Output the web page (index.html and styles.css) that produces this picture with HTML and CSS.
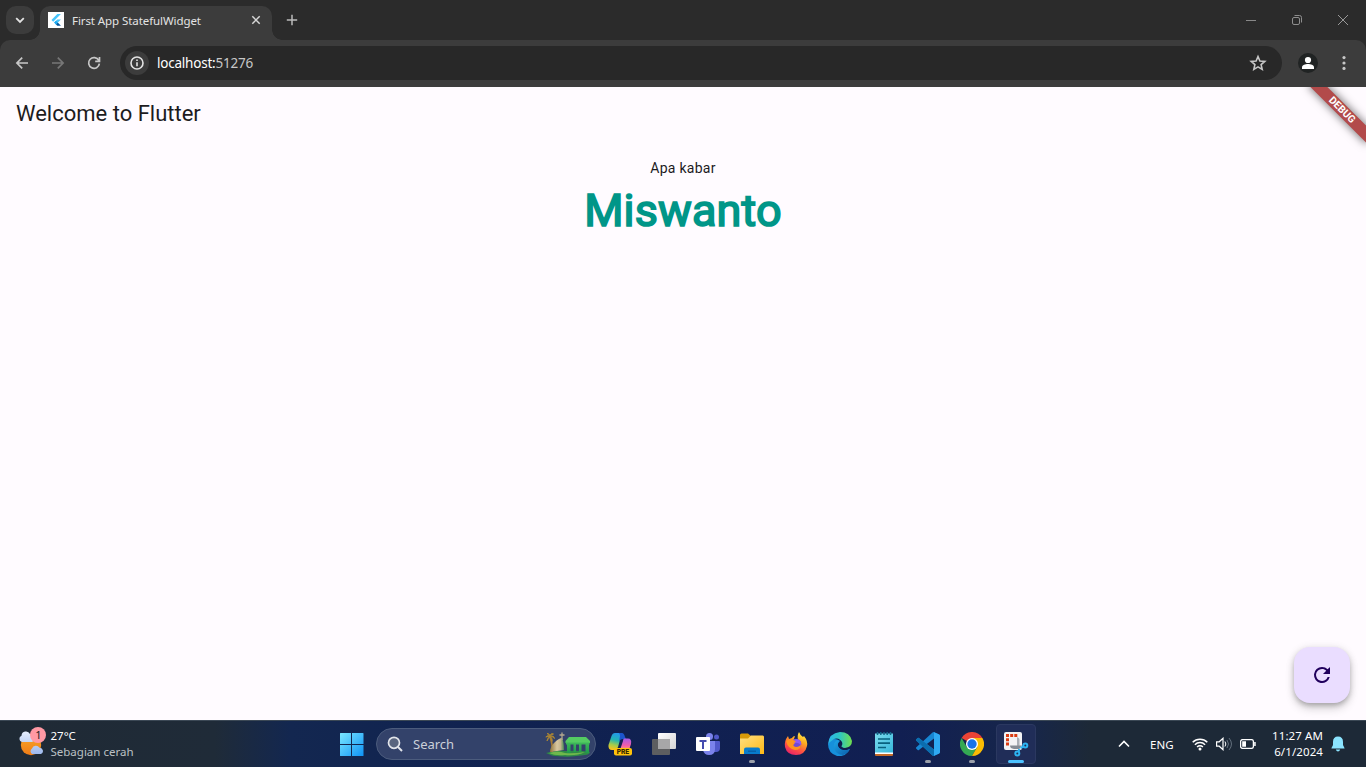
FILE: index.html
```html
<!DOCTYPE html>
<html lang="en">
<head>
<meta charset="utf-8">
<title>First App StatefulWidget</title>
<link rel="stylesheet" href="styles.css">
</head>
<body>
<header class="tabstrip">
  <button class="tab-search"><svg width="12" height="12" viewBox="0 0 12 12"><path d="M2.200 4.200 6 8l3.800-3.800" fill="none" stroke="#e3e3e3" stroke-width="1.800"/></svg></button>
  <div class="tab">
    <svg class="favicon" width="16" height="16" viewBox="0 0 16 16"><path fill="#fff" d="M0 0h16v16H0z"/><g transform="translate(2.300 2) scale(.49)"><path fill="#47c5fb" d="M14.314 0 2.300 12 6 15.700 21.684.013zM14.328 11.072 7.857 17.530l3.700 3.700 10.140-10.160z"/><path fill="#00569e" d="m11.550 21.200 3.690-3.680L21.700 24h-7.370z"/><path fill="#1ba8f0" d="m7.857 17.530 3.690-3.690 3.700 3.690-3.700 3.690z"/></g></svg>
    <span class="tab-title">First App StatefulWidget</span>
    <svg class="tab-close" width="16" height="16" viewBox="0 0 16 16"><path d="m4.300 4.300 7.400 7.400m0-7.400-7.400 7.400" stroke="#d6d6d6" stroke-width="1.500"/></svg>
  </div>
  <svg class="new-tab" width="16" height="16" viewBox="0 0 16 16"><path d="M8 2.800v10.400M2.800 8h10.400" stroke="#bcbcbc" stroke-width="1.500"/></svg>
  <div class="window-controls">
    <svg width="46" height="40" viewBox="0 0 46 40"><path d="M18 20.500h10" stroke="#888"/></svg>
    <svg width="46" height="40" viewBox="0 0 46 40"><g fill="none" stroke="#8e8e8e"><rect x="18.500" y="17.500" width="7" height="7" rx="1.500"/><path d="M20.500 15.500h5a2 2 0 0 1 2 2v5"/></g></svg>
    <svg width="46" height="40" viewBox="0 0 46 40"><path d="m18 15 10 10m0-10-10 10" stroke="#999"/></svg>
  </div>
</header>
<nav class="toolbar">
  <div class="nav-buttons">
    <svg width="16" height="16" viewBox="0 0 16 16"><path d="M14 8H3m5.200-5.300L2.900 8l5.300 5.300" fill="none" stroke="#c7c7c7" stroke-width="1.700"/></svg>
    <svg width="16" height="16" viewBox="0 0 16 16"><path d="M2 8h11M7.800 2.700 13.100 8l-5.300 5.300" fill="none" stroke="#777" stroke-width="1.700"/></svg>
    <svg width="16" height="16" viewBox="0 0 16 16"><path d="M12.800 5.400A5.400 5.400 0 1 0 13.400 8.700M13.500 2v4.300H9.200" fill="none" stroke="#c7c7c7" stroke-width="1.700"/></svg>
  </div>
  <div class="omnibox">
    <span class="site-info"><svg width="16" height="16" viewBox="0 0 16 16"><circle cx="8" cy="8" r="6" fill="none" stroke="#e3e3e3" stroke-width="1.600"/><path d="M8 7.200v4M8 4.500v1.600" stroke="#e3e3e3" stroke-width="1.600"/></svg></span>
    <span class="url">localhost:<span class="port">51276</span></span>
    <svg class="star" width="18" height="18" viewBox="0 0 18 18"><path d="m9 2.500 1.900 4.500 4.900.4-3.700 3.200 1.100 4.800L9 12.900l-4.200 2.500 1.100-4.800-3.700-3.200L7.100 7z" fill="none" stroke="#c7c7c7" stroke-width="1.600"/></svg>
  </div>
  <svg class="profile" width="20" height="20" viewBox="0 0 20 20"><circle cx="10" cy="10" r="10" fill="#202323"/><circle cx="10" cy="7" r="3.100" fill="#fff"/><path fill="#fff" d="M4 16v-1.700c0-2.100 3.400-3.200 6-3.200s6 1.100 6 3.200V16z"/></svg>
  <svg class="kebab" width="4" height="16" viewBox="0 0 4 16"><g fill="#c7c7c7"><circle cx="2" cy="2.600" r="1.600"/><circle cx="2" cy="8" r="1.600"/><circle cx="2" cy="13.400" r="1.600"/></g></svg>
</nav>
<main class="app">
  <h1 class="app-title">Welcome to Flutter</h1>
  <div class="greeting">
    <p class="hello">Apa kabar</p>
    <p class="name">Miswanto</p>
  </div>
  <button class="fab"><svg width="24" height="24" viewBox="0 0 24 24"><path fill="#21005d" d="M17.650 6.350A7.958 7.958 0 0 0 12 4a8 8 0 1 0 7.730 10h-2.080A6 6 0 1 1 12 6c1.660 0 3.140.69 4.220 1.780L13 11h7V4z"/></svg></button>
  <div class="banner">DEBUG</div>
</main>
<footer class="taskbar">
  <div class="weather">
    <svg width="32" height="36" viewBox="0 -4 32 36"><defs><linearGradient id="sun" x2="0" y2="1"><stop stop-color="#f9a82a"/><stop offset="1" stop-color="#ee7b16"/></linearGradient><linearGradient id="cloud" x2="0" y2="1"><stop stop-color="#e5edfc"/><stop offset="1" stop-color="#9db9ec"/></linearGradient></defs><circle cx="14" cy="15" r="10.200" fill="url(#sun)"/><path fill="url(#cloud)" d="M5 12a3.300 3.300 0 0 1-.5-6.300 4.500 4.500 0 0 1 8.500-1.700 4 4 0 0 1 2 8zM15 24a3.300 3.300 0 0 1 0-5.500 4.200 4.200 0 0 1 7.500-.8 3.300 3.300 0 0 1 1.500 6.300z"/><circle cx="21" cy="5" r="8" fill="#ff99a4"/><text x="21.500" y="9" class="badge-text">1</text></svg>
    <div class="weather-text"><span>27°C</span><span class="weather-desc">Sebagian cerah</span></div>
  </div>
  <div class="tasks">
    <div class="task"><svg width="24" height="24" viewBox="0 0 24 24"><defs><linearGradient id="win" gradientUnits="userSpaceOnUse" x1="0" y1="0" x2="24" y2="24"><stop stop-color="#7de9ff"/><stop offset="1" stop-color="#0d91f5"/></linearGradient></defs><path fill="url(#win)" d="M0 1.500Q0 1 .5 1H11v11H0zM12 1h11q.5 0 .5.500v10.500H12zM0 13h11v11H.5q-.5 0-.5-.5zM12 13h11.500v10.500q0 .5-.5.500H12z"/></svg></div>
    <div class="search">
      <svg width="16" height="16" viewBox="0 0 16 16"><circle cx="7" cy="6.800" r="5.500" fill="#59657f" stroke="#e2e5eb" stroke-width="1.700"/><path d="m11 11 4 4" stroke="#e2e5eb" stroke-width="2"/></svg>
      <span>Search</span>
      <svg class="highlight" width="46" height="26" viewBox="0 0 46 26"><defs><linearGradient id="stone" x2="1"><stop stop-color="#8f7238"/><stop offset=".5" stop-color="#d9c7a0"/><stop offset=".75" stop-color="#c5b58e"/><stop offset="1" stop-color="#4c8c53"/></linearGradient><linearGradient id="temple" x2="0" y2="1"><stop stop-color="#3fb85a"/><stop offset="1" stop-color="#1f9a4c"/></linearGradient></defs><path fill="#2f8a47" d="M1 22q10-3 21-2 13-1 23 1 0 3-9 3.500-9 1.500-18 1-9-.5-11-1z"/><path d="M5 6q3 8 2 15" fill="none" stroke="#a8782f" stroke-width="1.700"/><path d="M5 5.500Q3 3.500.800 6q2.200-.5 4.200-.5Q2 7 2 10q1.500-2.500 3-4.500 2 2 2 5 1-3-2-5 3 0 4.500 2Q9 4 5 5.500 7 3 8.500 3 5.500 1.500 5 5.500 4.500 2 2 2.500 4 3 5 5.500z" fill="#a98434" stroke="#a98434" stroke-width=".9"/><path fill="url(#stone)" d="M5 21q0-5 4-9 5-5 8-5 2 4 2 12z"/><path d="M17 9V1.500M14.500 4h5" stroke="#b4a88f" stroke-width="1.300"/><path fill="#54cc62" d="m20.500 10 3.500-4h17l4 4v2H20.500z"/><path fill="url(#temple)" d="M21 11.500h23.500v2H21zM22 13h3.500v9H22zM28.500 13H31v8h-2.500zM34 13h2.500v8H34zM40.500 13H44v9h-3.500z"/><path fill="#6fb84c" d="M4 22q9-3 16 0 7 1 20-1-8 4-20 3-10 1-16-2z"/></svg>
    </div>
    <div class="task"><svg width="24" height="24" viewBox="0 0 24 24"><defs><linearGradient id="cpa" x1=".5" x2=".3" y2="1"><stop stop-color="#2398e8"/><stop offset=".4" stop-color="#22b7b1"/><stop offset=".7" stop-color="#a6cb4b"/><stop offset="1" stop-color="#ffc31a"/></linearGradient><linearGradient id="cpb" x2="0" y2="1"><stop stop-color="#a65be8"/><stop offset=".6" stop-color="#f05ca9"/><stop offset="1" stop-color="#ff9b73"/></linearGradient></defs><path fill="url(#cpa)" d="M7 1h7L10 15q-1 3-4 3H4q-4 0-3.500-5L3.500 4Q4.500 1 7 1z"/><path fill="#1c55cc" d="M11 1h3q2 0 3 4l1 2h-3q-3 0-4 3l1-6q0-2-1-3z"/><path fill="url(#cpb)" d="M16 6.500h4q4 0 3 5.500l-2 6h-9l3-9q0-2 1-2.500z"/><rect x="6" y="16" width="18" height="7.500" rx="2" fill="#ffc20a"/><text x="15" y="22.200" class="pre-text">PRE</text></svg></div>
    <div class="task"><svg width="24" height="24" viewBox="0 0 24 24"><defs><linearGradient id="tv" x2="1" y2="1"><stop stop-color="#fff"/><stop offset="1" stop-color="#d4d4d4"/></linearGradient></defs><rect x="6" y="1" width="18" height="16" rx="1" fill="url(#tv)"/><rect y="7" width="18" height="16" rx="1" fill="#5d5e60"/><path fill="#a7a7a8" d="M6 7h12v10H6z"/></svg></div>
    <div class="task"><svg width="24" height="24" viewBox="0 0 24 24"><circle cx="13.500" cy="4.500" r="3.500" fill="#7b83eb"/><circle cx="20.500" cy="5" r="2.500" fill="#5059c9"/><path fill="#5059c9" d="M16 9h7q1 0 1 1v6q0 4-4 4h-4z"/><path fill="#7b83eb" d="M8 9h11v8q0 6-6 6-5 0-6-5z"/><rect y="5" width="14" height="14" rx="1" fill="#fff"/><path fill="#454baf" d="M3.500 8h7v2H8v7H6v-7H3.500z"/></svg></div>
    <div class="task running"><svg width="24" height="24" viewBox="0 0 24 24"><defs><linearGradient id="fold" x2="1" y2="1"><stop stop-color="#ffe083"/><stop offset="1" stop-color="#ffb915"/></linearGradient></defs><path fill="#d99a08" d="M0 3q0-1.500 1.500-1.500H8l3 2.500h7v4H0z"/><path fill="url(#fold)" d="M0 6.500h8l3-3h12l1 1V22H0z"/><path fill="#087bcc" d="M4 22v-4.500q0-2 2-2h12q2 0 2 2V22z"/><path fill="#0760a8" d="M8 18.500h8V20H8z"/></svg></div>
    <div class="task"><svg width="24" height="24" viewBox="0 0 24 24"><defs><linearGradient id="fox" x1=".8" x2=".3" y2="1"><stop stop-color="#fff34d"/><stop offset=".35" stop-color="#ffad20"/><stop offset=".68" stop-color="#ff5540"/><stop offset="1" stop-color="#e72169"/></linearGradient></defs><path fill="url(#fox)" d="M15 0q1 3 4 5l1-1q4 5 3 10-2 9-11 9T1 15Q0 9 4 4l1 3 3-1q1-2 3-2l-1 3 4 1q-1-5 1-8z"/><circle cx="12" cy="12" r="5.300" fill="#7149d6"/><path fill="#ff941d" d="M2 9q3-3 7-1l4 1-3 3q-2 2 2 3 4 0 5-3 0 6-6 6-7-1-9-9z"/><path fill="#9058f4" d="M10 8q5-2 7 2v3q-3-3-7-2l2-2z"/></svg></div>
    <div class="task"><svg width="24" height="24" viewBox="0 0 24 24"><defs><linearGradient id="edg" x1="0" x2="1"><stop stop-color="#2cb6ed"/><stop offset=".5" stop-color="#2fc6c0"/><stop offset="1" stop-color="#70df4c"/></linearGradient><linearGradient id="edb" x2="1" y2="1"><stop stop-color="#1da7e9"/><stop offset="1" stop-color="#0b5ca9"/></linearGradient></defs><path fill="#1690db" d="M0 12q0 9 9 12 7 1 11-4l2-3q-7 3-11-1-3-4 1-7Q5 4 0 12z"/><path fill="url(#edb)" d="M9 8q-4 3-3 8 2 7 9 7 4-1 7-6-7 3-11-1-3-4 1-7z"/><path fill="url(#edg)" d="M0 12Q1 1 12 0q10 0 12 9 0 6-7 7-4 0-4-2 2-1 1-4Q9 2 0 12z"/><path fill="#101f50" d="M12 9q2.500 1 1.500 4-1 2.500 3.500 3 3 0 5-1-1 2-4 2-5 0-7-3-1-3 1-5z"/></svg></div>
    <div class="task"><svg width="24" height="24" viewBox="0 0 24 24"><defs><linearGradient id="note" x2="1" y2="1"><stop stop-color="#7cdbed"/><stop offset="1" stop-color="#36b7db"/></linearGradient></defs><path fill="#c46928" d="M3 20h18v3q0 1-1 1H4q-1 0-1-1z"/><path fill="#fff" d="M3 20h18v2H3z"/><path fill="url(#note)" d="M3 1.500h18v19H3z"/><path stroke="#126789" stroke-width="1.500" d="M5.500 0v3M8.800 0v3m3.200-3v3m3.200-3v3m3.300-3v3"/><path stroke="#09627f" stroke-width="1.700" d="M6 7h12M6 11.200h12M6 15.500h8"/></svg></div>
    <div class="task running"><svg width="24" height="24" viewBox="0 0 100 100"><defs><clipPath id="vsright"><path d="M75 0h25v100H75z"/></clipPath><path id="vs" d="M96.460 10.800 75.860.88a6.230 6.230 0 0 0-7.100 1.200L29.350 38.040 12.190 25.010a4.160 4.160 0 0 0-5.320.24L1.360 30.260a4.170 4.170 0 0 0 0 6.160L16.240 50 1.350 63.580a4.170 4.170 0 0 0 0 6.160l5.510 5.010a4.160 4.160 0 0 0 5.320.24l17.170-13.030 39.410 35.960a6.220 6.220 0 0 0 7.100 1.200l20.600-9.910A6.250 6.250 0 0 0 100 83.600V16.400a6.250 6.250 0 0 0-3.540-5.600zM75 72.700 45.100 50 75 27.300z"/></defs><use href="#vs" fill="#1786d2"/><path fill="#0b6dae" d="m1.400 36.400 67.300 61.500q3 2.500 6.300 1.500V72.700L12.200 25q-3-2-5.300.2l-5.500 5q-3 3 0 6.200z"/><use href="#vs" fill="#2fa9f2" clip-path="url(#vsright)"/></svg></div>
    <div class="task running"><svg width="24" height="24" viewBox="0 0 24 24"><path fill="#ea4335" d="M1.600 6A12 12 0 0 1 22.400 6L12 12z"/><path fill="#34a853" d="M1.600 6A12 12 0 0 0 12 24l5.200-9H6.800z"/><path fill="#fbbc04" d="M22.400 6A12 12 0 0 1 12 24l5.200-9L12 6z"/><circle cx="12" cy="12" r="6" fill="#fff"/><circle cx="12" cy="12" r="4.700" fill="#1a73e8"/></svg></div>
    <div class="task active"><svg width="26" height="26" viewBox="0 0 26 26"><rect x="1" y="1" width="18" height="18" rx="2" fill="#f3f3f5"/><path fill="#db3b12" d="M3 3h3v3H3zM7.200 3h3v3h-3zM11.300 3h3v3h-3zM3 7.300h3v3H3zM3 11.500h3v3H3z"/><path fill="#aaaeb5" d="M14 6q3 1 2.500 4v8H14z"/><path fill="#858b94" d="M7 14.500h12L16 18h-5q-4-.5-4-3.500z"/><g fill="none" stroke="#2db4f2" stroke-width="2"><circle cx="22.300" cy="14.500" r="2"/><circle cx="14.300" cy="22.500" r="2"/><path d="m20.500 15.500-3 1.500m-2 4 .7-3"/></g></svg></div>
  </div>
  <div class="tray">
    <svg class="chevron" width="12" height="8" viewBox="0 0 12 8"><path d="m1 6.500 5-5 5 5" fill="none" stroke="#fff" stroke-width="1.600"/></svg>
    <span class="lang">ENG</span>
    <svg class="wifi" width="16" height="13" viewBox="0 0 16 13"><g fill="none" stroke="#fff" stroke-width="1.500"><path d="M.700 4.300a10.300 10.300 0 0 1 14.600 0M2.900 6.700a7.200 7.200 0 0 1 10.200 0M5.100 9a4.100 4.100 0 0 1 5.800 0"/></g><circle cx="8" cy="10.900" r="1.500" fill="#fff"/></svg>
    <svg class="volume" width="16" height="14" viewBox="0 0 16 14"><path d="M.600 4.800h2.600L7 1.300v11.400L3.200 9.200H.600z" fill="none" stroke="#fff" stroke-width="1.200"/><path d="M9 4.500q1.700 2.500 0 5" fill="none" stroke="#fff"/><path d="M11 3q3 4 0 8m2-10q5 6 0 12" fill="none" stroke="#63707d"/></svg>
    <svg class="battery" width="16" height="10" viewBox="0 0 16 10"><rect x=".6" y=".6" width="12.800" height="8.800" rx="2" fill="none" stroke="#fff" stroke-width="1.300"/><path fill="#fff" d="M2.200 2.200H6v5.600H2.200zM14.200 3h1.500v4h-1.500z"/></svg>
    <div class="clock"><span>11:27 AM</span><span>6/1/2024</span></div>
    <svg class="bell" width="14" height="16" viewBox="0 0 14 16"><path fill="#8be4ff" d="M7 .5q5 0 5 5.500v3l1.500 3v.5H.500V12L2 9V6Q2 .5 7 .5zM4.800 13.500h4.400Q8.500 15.500 7 15.500t-2.200-2z"/></svg>
  </div>
</footer>
</body>
</html>
```
FILE: styles.css
```css
* { box-sizing: border-box; }
body {
  margin: 0;
  width: 1366px;
  height: 767px;
  overflow: hidden;
  display: flex;
  flex-direction: column;
  background: #2b2b2b;
  font-family: "Noto Sans", "Open Sans", sans-serif;
}
svg { display: block; flex: none; }
button { border: 0; padding: 0; display: flex; align-items: center; justify-content: center; }

.tabstrip { height: 40px; flex: none; display: flex; align-items: center; padding-left: 6px; background: #2b2b2b; }
.tab-search { width: 28px; height: 28px; border-radius: 10px; background: #3c3c3c; }
.tab {
  position: relative;
  align-self: flex-end;
  width: 232px;
  height: 34px;
  margin-left: 6px;
  padding: 0 8px 6px;
  display: flex;
  align-items: center;
  border-radius: 10px 10px 0 0;
  background: #3c3c3c;
}
.tab::before, .tab::after { content: ""; position: absolute; bottom: 0; width: 10px; height: 10px; }
.tab::before { left: -10px; background: radial-gradient(circle at 0 0, transparent 9.500px, #3c3c3c 10px); }
.tab::after { right: -10px; background: radial-gradient(circle at 100% 0, transparent 9.500px, #3c3c3c 10px); }
.tab-title { margin-left: 8px; padding-top: 1px; font-size: 11.500px; letter-spacing: -0.080px; color: #e3e3e3; white-space: nowrap; }
.tab-close { margin-left: auto; }
.new-tab { margin-left: 12px; }
.window-controls { display: flex; margin-left: auto; }

.toolbar { height: 47px; flex: none; display: flex; align-items: center; background: #3c3c3c; border-radius: 10px 10px 0 0; padding: 0 20px 1px 14px; }
.nav-buttons { display: flex; gap: 20px; }
.omnibox { flex: 1; height: 34px; margin: 0 16px 0 18px; padding: 0 15px 0 5px; display: flex; align-items: center; border-radius: 17px; background: #282828; }
.site-info { width: 24px; height: 24px; border-radius: 50%; background: #3c3c3c; display: flex; align-items: center; justify-content: center; }
.url { margin-left: 8px; font-size: 13.500px; letter-spacing: -0.220px; color: #fff; }
.port { color: #c7c7c7; }
.star { margin-left: auto; }
.kebab { margin-left: 24px; }

.app { position: relative; flex: 1; overflow: hidden; background: #fffbff; font-family: Roboto, sans-serif; }
.app-title { margin: 0; padding: 0 16px; font-size: 22px; font-weight: 400; line-height: 54px; color: #1d1b1e; }
.greeting { display: flex; flex-direction: column; align-items: center; padding-top: 17px; }
.greeting p { margin: 0; }
.hello { font-size: 14px; line-height: 20px; letter-spacing: 0.250px; color: #1d1b1e; }
.name { padding-top: 1px; font-size: 45px; line-height: 64px; letter-spacing: 0.150px; color: #009688; -webkit-text-stroke: 1.700px #009688; }
.fab { position: absolute; right: 16px; bottom: 17px; width: 56px; height: 56px; border-radius: 16px; background: #eaddff; box-shadow: 0 3px 5px -1px rgba(0,0,0,.2), 0 6px 10px rgba(0,0,0,.14), 0 1px 8px rgba(0,0,0,.12); }
.banner {
  position: absolute;
  top: 27px;
  right: -40px;
  width: 80px;
  height: 12px;
  transform-origin: 50% -28px;
  transform: rotate(45deg);
  background: #b24a4a;
  box-shadow: 0 0 8px 1px rgba(0,0,0,.5);
  color: #fff;
  text-align: center;
  font-size: 10.200px;
  font-weight: 700;
  line-height: 12px;
}

.taskbar {
  position: relative;
  height: 47px;
  flex: none;
  border-top: 1px solid #3b4855;
  background: linear-gradient(90deg, #1f2a35 0, #1f2b38 215px, #132750 290px, #102250 500px, #111f52 900px, #17264a 1030px, #1d2937 1090px, #1d2937 100%);
  color: #fff;
  display: grid;
  grid-template-columns: 332px 704px 1fr;
  align-items: center;
}
.weather { display: flex; align-items: center; padding-left: 17px; }
.weather-text { display: flex; flex-direction: column; margin-left: 1.500px; font-size: 11.500px; line-height: 16px; letter-spacing: 0; }
.weather-desc { color: #bbc0c4; }
.badge-text { font-size: 11px; text-anchor: middle; fill: #222; }
.pre-text { font: 800 6.500px Inter, sans-serif; text-anchor: middle; fill: #332700; }
.tasks { display: flex; gap: 4px; align-items: center; }
.task { position: relative; width: 40px; height: 40px; display: flex; align-items: center; justify-content: center; border-radius: 4px; }
.running::after, .active::after { content: ""; position: absolute; bottom: 1px; left: 17px; width: 6px; height: 3px; border-radius: 2px; background: #9ba0aa; }
.active { background: #202d58; border: 1px solid #2b3860; }
.active::after { left: 11px; bottom: 0; width: 16px; background: #4cc2ff; }
.search { width: 220px; height: 32px; border-radius: 16px; border: 1px solid #4c5c7d; background: #33426a; display: flex; align-items: center; padding: 0 4px 0 10px; font-size: 13px; color: #cbd0d9; }
.search span { margin-left: 10px; }
.highlight { margin-left: auto; }
.tray { display: flex; align-items: center; padding-left: 82px; }
.lang { margin-left: 20px; width: 24px; font-size: 11.500px; letter-spacing: 0; }
.wifi { margin-left: 18px; }
.volume { margin-left: 8px; }
.battery { margin-left: 8px; }
.clock { width: 67px; display: flex; flex-direction: column; text-align: right; font-size: 11.500px; line-height: 16px; letter-spacing: 0.100px; white-space: nowrap; }
.bell { margin-left: 8px; }
```
